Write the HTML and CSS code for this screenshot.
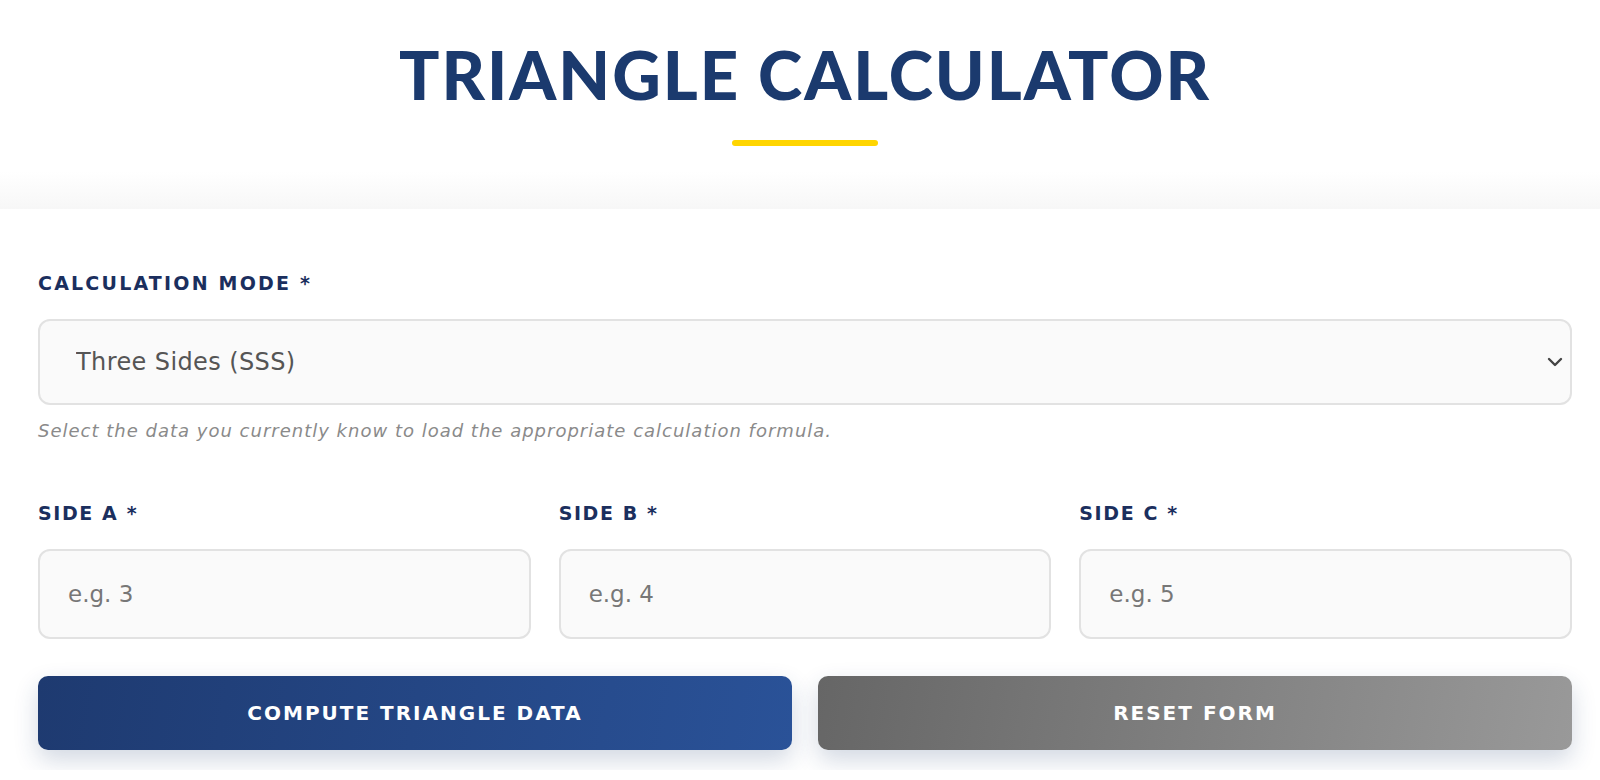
FILE: index.html
```html
<!DOCTYPE html>
<html lang="en">
<head>
    <meta charset="UTF-8">
    <meta name="viewport" content="width=device-width, initial-scale=1.0">
    <title>Triangle Calculator</title>
    <link rel="stylesheet" href="styles.css">
</head>
<body>
    <header class="page-header">
        <h1>TRIANGLE CALCULATOR</h1>
        <div class="accent-bar"></div>
    </header>

    <main class="calc-card">
        <form id="triangleForm">
            <div class="field">
                <label for="mode">CALCULATION MODE *</label>
                <div class="select-wrap">
                    <select id="mode">
                        <option>Three Sides (SSS)</option>
                        <option>Two Sides and Included Angle (SAS)</option>
                        <option>Two Angles and a Side (ASA)</option>
                    </select>
                    <svg class="chevron" width="16" height="10" viewBox="0 0 16 10">
                        <path d="M2 2 L8 8 L14 2" fill="none" stroke="#444" stroke-width="2.4" stroke-linecap="round" stroke-linejoin="round"/>
                    </svg>
                </div>
                <p class="hint">Select the data you currently know to load the appropriate calculation formula.</p>
            </div>

            <div class="side-row">
                <div class="field">
                    <label for="sideA">SIDE A *</label>
                    <input type="number" id="sideA" placeholder="e.g. 3">
                </div>
                <div class="field">
                    <label for="sideB">SIDE B *</label>
                    <input type="number" id="sideB" placeholder="e.g. 4">
                </div>
                <div class="field">
                    <label for="sideC">SIDE C *</label>
                    <input type="number" id="sideC" placeholder="e.g. 5">
                </div>
            </div>

            <div class="button-row">
                <button type="submit" class="btn btn-primary">COMPUTE TRIANGLE DATA</button>
                <button type="reset" class="btn btn-secondary">RESET FORM</button>
            </div>
        </form>
    </main>
</body>
</html>
```

FILE: styles.css
```css
body {
    margin: 0;
    font-family: "DejaVu Sans", "Open Sans", sans-serif;
    background-color: #ffffff;
    color: #1b2f5e;
}
.page-header {
    text-align: center;
    height: 177px;
    padding: 32px 28px 0 38px;
    background: linear-gradient(to bottom, #ffffff 0%, #ffffff 82%, #f7f7f7 100%);
}
.page-header h1 {
    margin: 0;
    font-family: Lato, "Open Sans", sans-serif;
    font-weight: 900;
    font-size: 67px;
    line-height: 84px;
    letter-spacing: 2px;
    color: #1b3a6e;
}
.accent-bar {
    width: 146px;
    height: 6px;
    margin: 24px auto 0;
    background-color: #ffd500;
    border-radius: 3px;
}
.calc-card {
    background: #ffffff;
    padding: 63px 28px 20px 38px;
}
.field {
    display: flex;
    flex-direction: column;
}
.field label {
    font-size: 19px;
    line-height: 22px;
    font-weight: 700;
    letter-spacing: 2.2px;
    color: #1b2f5e;
    margin-bottom: 25px;
}
.side-row .field label {
    letter-spacing: 1.6px;
}
.select-wrap {
    position: relative;
}
select {
    width: 100%;
    height: 86px;
    padding: 0 36px;
    font-family: "DejaVu Sans", sans-serif;
    font-size: 24px;
    letter-spacing: 0.4px;
    color: #555555;
    background-color: #fafafa;
    border: 2px solid #e2e2e2;
    border-radius: 12px;
    appearance: none;
    -webkit-appearance: none;
}
.chevron {
    position: absolute;
    right: 9px;
    top: 38px;
    pointer-events: none;
}
.hint {
    margin: 16px 0 0;
    font-size: 18px;
    line-height: 20px;
    font-style: italic;
    letter-spacing: 1px;
    color: #8a8a8a;
}
.side-row {
    display: grid;
    grid-template-columns: repeat(3, 1fr);
    gap: 28px;
    margin-top: 61px;
}
input[type="number"] {
    height: 90px;
    box-sizing: border-box;
    padding: 0 28px;
    font-family: "DejaVu Sans", sans-serif;
    font-size: 23px;
    color: #333;
    background-color: #fafafa;
    border: 2px solid #e2e2e2;
    border-radius: 12px;
}
input::placeholder {
    color: #777777;
}
.button-row {
    display: grid;
    grid-template-columns: 1fr 1fr;
    gap: 26px;
    margin-top: 37px;
}
.btn {
    height: 74px;
    border: none;
    border-radius: 10px;
    color: #ffffff;
    font-family: "DejaVu Sans", sans-serif;
    font-size: 20px;
    font-weight: 700;
    letter-spacing: 2px;
    cursor: pointer;
    box-shadow: 0 10px 24px rgba(30, 58, 112, 0.2);
}
.btn-primary {
    background: linear-gradient(100deg, #1e3a70 0%, #2a5298 100%);
}
.btn-secondary {
    background: linear-gradient(100deg, #666666 0%, #999999 100%);
}
```
